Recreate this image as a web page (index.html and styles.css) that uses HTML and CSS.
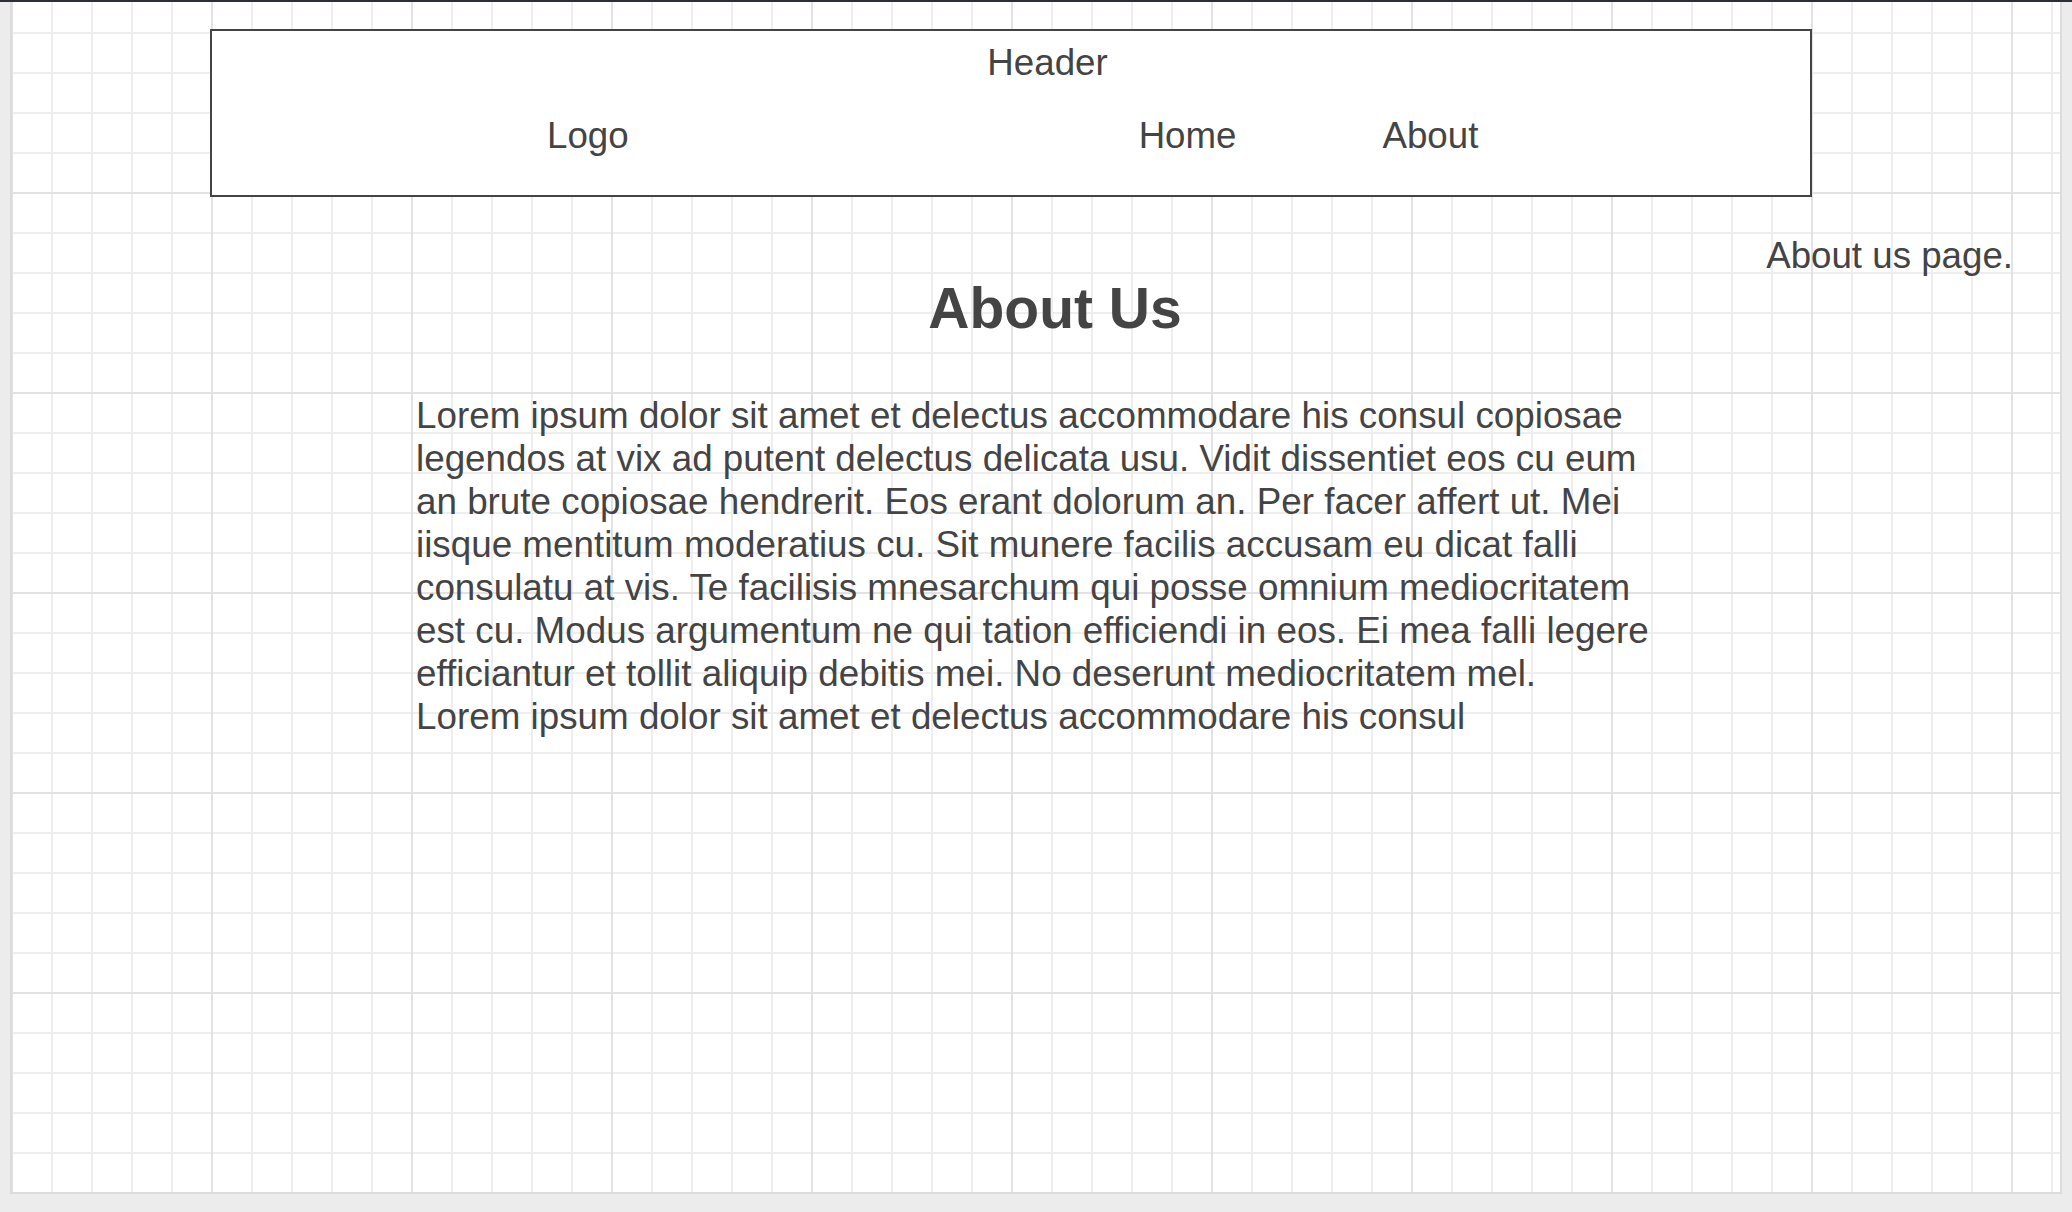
FILE: index.html
```html
<!DOCTYPE html>
<html lang="en">
<head>
<meta charset="utf-8">
<title>About Us</title>
<link rel="stylesheet" href="styles.css">
</head>
<body>
<div class="topbar"></div>
<div class="canvas">
  <header class="hdr">
    <div class="hdr-title">Header</div>
    <nav class="hdr-nav">
      <span class="logo">Logo</span>
      <span class="nav-home">Home</span>
      <span class="nav-about">About</span>
    </nav>
  </header>
  <div class="content">
    <main class="main">
      <h1 class="title">About Us</h1>
      <p class="text">Lorem ipsum dolor sit amet et delectus accommodare his consul copiosae legendos at vix ad putent delectus delicata usu. Vidit dissentiet eos cu eum an brute copiosae hendrerit. Eos erant dolorum an. Per facer affert ut. Mei iisque mentitum moderatius cu. Sit munere facilis accusam eu dicat falli consulatu at vis. Te facilisis mnesarchum qui posse omnium mediocritatem est cu. Modus argumentum ne qui tation efficiendi in eos. Ei mea falli legere efficiantur et tollit aliquip debitis mei. No deserunt mediocritatem mel.<br>Lorem ipsum dolor sit amet et delectus accommodare his consul</p>
    </main>
    <aside class="note">About us page.</aside>
  </div>
</div>
</body>
</html>
```

FILE: styles.css
```css
html, body {
  margin: 0;
  padding: 0;
}

body {
  background: #ececec;
  font-family: "Liberation Sans", Arial, sans-serif;
  color: #444444;
  font-size: 36.7px;
  line-height: 1.2;
  width: 2072px;
  height: 1212px;
  overflow: hidden;
}

.topbar {
  height: 2px;
  background: #2c2e38;
}

.canvas {
  margin: 0 10px;
  height: 1190px;
  border-left: 2px solid #dcdcdc;
  border-right: 2px solid #dcdcdc;
  border-bottom: 2px solid #dcdcdc;
  background-color: #ffffff;
  background-image:
    linear-gradient(to right, #e2e2e2 2px, transparent 2px),
    linear-gradient(to bottom, #e2e2e2 2px, transparent 2px),
    linear-gradient(to right, #eeeeee 2px, transparent 2px),
    linear-gradient(to bottom, #eeeeee 2px, transparent 2px);
  background-size: 200px 100%, 100% 200px, 40px 100%, 100% 40px;
  background-position: 199px 0, 0 190px, 39px 0, 0 30px;
  overflow: hidden;
}

.hdr {
  box-sizing: border-box;
  margin: 27px 0 0 198px;
  width: 1602px;
  height: 168px;
  border: 2px solid #444444;
  background: #ffffff;
  padding-top: 10px;
}

.hdr-title {
  text-align: center;
  padding-left: 73px;
}

.hdr-nav {
  display: flex;
  margin-top: 29px;
}

.logo {
  margin-left: 335px;
}

.nav-home {
  margin-left: 510px;
}

.nav-about {
  margin-left: 146px;
}

.content {
  display: flex;
  align-items: flex-start;
}

.main {
  margin-left: 404px;
  width: 1278px;
}

.title {
  margin: 77px 0 0 0;
  font-size: 57px;
  font-weight: bold;
  line-height: 1.2;
  text-align: center;
}

.text {
  margin: 52px 0 0 0;
  width: 1252px;
  font-size: 36.8px;
  line-height: 43px;
}

.note {
  margin: 37px 47px 0 auto;
  white-space: nowrap;
}
```
